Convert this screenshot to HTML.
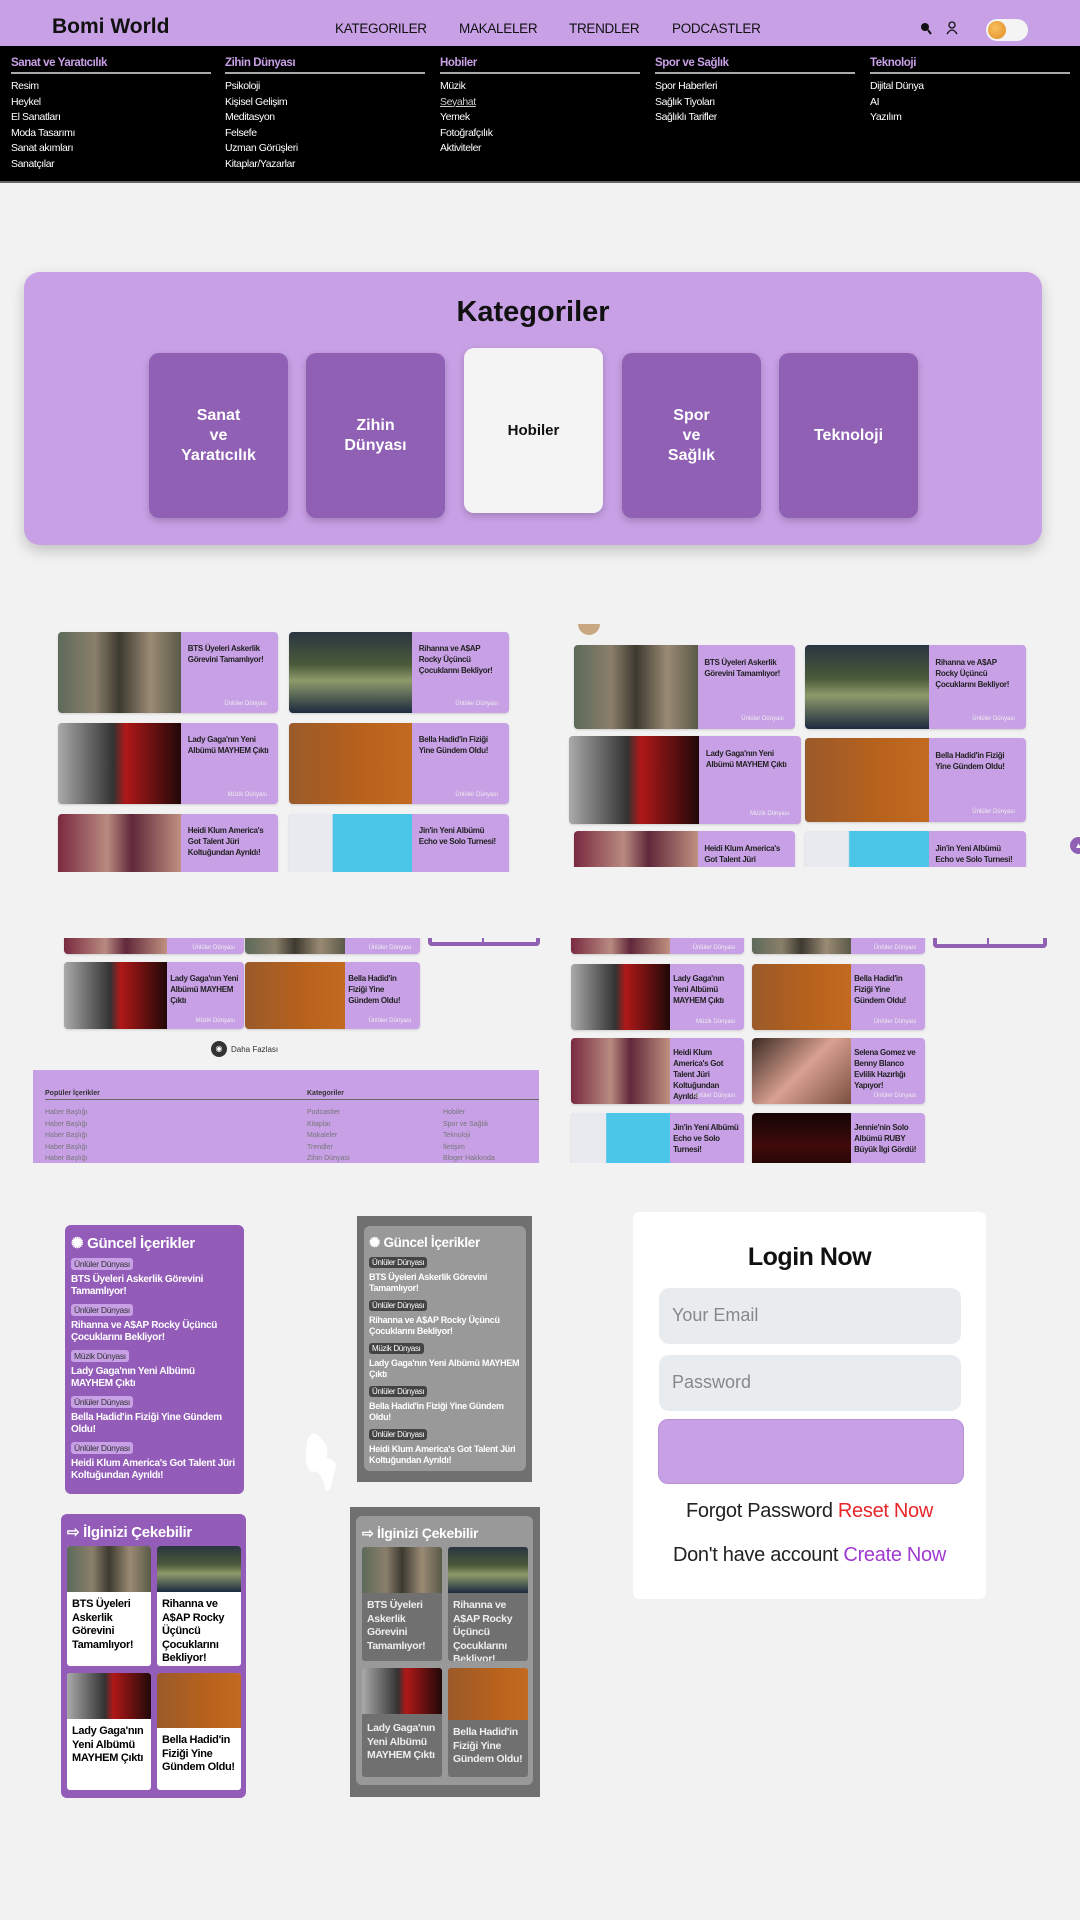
<!DOCTYPE html>
<html><head><meta charset="utf-8"><style>
*{margin:0;padding:0;box-sizing:border-box}
body{width:1080px;height:1920px;background:#f2f2f2;font-family:"Liberation Sans",sans-serif;position:relative;overflow:hidden}
.a{position:absolute}
.hdr{left:0;top:0;width:1080px;height:46px;background:#c8a0e6}
.mega{left:0;top:46px;width:1080px;height:137px;background:#000;border-bottom:2px solid #666}
.col{position:absolute;top:11px;width:200px;font-size:10.5px;color:#fff;letter-spacing:-.4px}
.col h4{color:#c8a0e6;font-size:11.5px;font-weight:bold;padding-bottom:3px;border-bottom:2px solid #aaa;margin-bottom:6px}
.col div{height:15.5px}
.cat{left:24px;top:272px;width:1018px;height:273px;background:#c8a0e6;border-radius:16px;box-shadow:0 6px 14px rgba(0,0,0,.2)}
.cc{position:absolute;top:81px;width:139px;height:165px;background:#9060b4;border-radius:10px;color:#fff;font-weight:bold;font-size:16px;display:flex;align-items:center;justify-content:center;text-align:center;line-height:20px;box-shadow:0 3px 8px rgba(0,0,0,.2)}
.clip{position:absolute;overflow:hidden}
.nc{position:absolute;background:#c8a0e6;border-radius:4px;overflow:hidden;box-shadow:0 1px 2px rgba(0,0,0,.15)}
.nc .im{position:absolute;left:0;top:0;bottom:0;width:56%}
.nc .t{position:absolute;left:59%;right:3%;top:14%;font-size:8px;font-weight:bold;color:#222;line-height:11px;letter-spacing:-.3px}
.nc .c{position:absolute;right:5%;bottom:8%;font-size:6px;color:#eee}
.bts{background:linear-gradient(90deg,#5d6a5a,#8a7f6a 30%,#3d3a30 50%,#9a8a74 75%,#5a5a48)}
.rih{background:linear-gradient(180deg,#2b3541,#4a5a3a 40%,#8e9a6a 60%,#1c2a40)}
.gag{background:linear-gradient(90deg,#aaa,#333 45%,#b01818 55%,#200808)}
.bel{background:linear-gradient(90deg,#9a5a2a,#b8621c 60%,#c26a20)}
.hei{background:linear-gradient(90deg,#7a2a40,#b88a80 40%,#60283a 60%,#c09080)}
.jin{background:linear-gradient(90deg,#e8eaf0 35%,#4cc6e8 36%)}
.sel{background:linear-gradient(135deg,#3a2a22,#d8a090 50%,#7a5040)}
.jen{background:linear-gradient(180deg,#150505,#400a0a 50%,#100404)}
.foot{left:33px;top:1070px;width:506px;height:93px;background:#c8a0e6;font-size:7px;color:#777}
.box{border-radius:6px}
.tag{display:inline-block;font-size:8.5px;padding:1px 3px;border-radius:3px;margin-top:6px;letter-spacing:-.3px}
.it{font-size:10px;font-weight:bold;line-height:12px;margin-top:2px;letter-spacing:-.3px}
.cell{position:absolute;width:84px;border-radius:3px;overflow:hidden}
.cell .p{height:46px}
.cell .tx{padding:6px 5px;font-size:11px;font-weight:bold;line-height:13.5px;letter-spacing:-.3px}
</style></head><body>

<div class="a hdr">
 <div class="a" style="left:52px;top:15px;font-size:21px;font-weight:bold;color:#111">Bomi World</div>
 <div class="a" style="left:335px;top:21px;font-size:13.5px;color:#111;letter-spacing:-.3px">KATEGORILER</div>
 <div class="a" style="left:459px;top:21px;font-size:13.5px;color:#111;letter-spacing:-.3px">MAKALELER</div>
 <div class="a" style="left:569px;top:21px;font-size:13.5px;color:#111;letter-spacing:-.3px">TRENDLER</div>
 <div class="a" style="left:672px;top:21px;font-size:13.5px;color:#111;letter-spacing:-.3px">PODCASTLER</div>
 <svg class="a" style="left:920px;top:22px" width="12" height="13"><circle cx="5" cy="5" r="4" fill="#111"/><line x1="8" y1="8" x2="11" y2="12" stroke="#111" stroke-width="2"/></svg>
 <svg class="a" style="left:946px;top:21px" width="12" height="14"><circle cx="6" cy="4" r="3" fill="none" stroke="#111" stroke-width="1.3"/><path d="M1 13 Q6 5 11 13" fill="none" stroke="#111" stroke-width="1.3"/></svg>
 <div class="a" style="left:986px;top:19px;width:42px;height:22px;border-radius:11px;background:#f4f4f4"><div class="a" style="left:2px;top:2px;width:18px;height:18px;border-radius:50%;background:radial-gradient(circle at 40% 40%,#f8c060,#e08a20)"></div></div>
</div>

<div class="a mega">
 <div class="col" style="left:11px"><h4>Sanat ve Yaratıcılık</h4><div>Resim</div><div>Heykel</div><div>El Sanatları</div><div>Moda Tasarımı</div><div>Sanat akımları</div><div>Sanatçılar</div></div>
 <div class="col" style="left:225px"><h4>Zihin Dünyası</h4><div>Psikoloji</div><div>Kişisel Gelişim</div><div>Meditasyon</div><div>Felsefe</div><div>Uzman Görüşleri</div><div>Kitaplar/Yazarlar</div></div>
 <div class="col" style="left:440px"><h4>Hobiler</h4><div>Müzik</div><div style="text-decoration:underline;color:#ccc">Seyahat</div><div>Yemek</div><div>Fotoğrafçılık</div><div>Aktiviteler</div></div>
 <div class="col" style="left:655px"><h4>Spor ve Sağlık</h4><div>Spor Haberleri</div><div>Sağlık Tiyoları</div><div>Sağlıklı Tarifler</div></div>
 <div class="col" style="left:870px"><h4>Teknoloji</h4><div>Dijital Dünya</div><div>AI</div><div>Yazılım</div></div>
</div>

<div class="a cat">
 <div class="a" style="left:0;width:1018px;top:24px;text-align:center;font-size:29px;font-weight:bold;color:#111">Kategoriler</div>
 <div class="cc" style="left:125px">Sanat<br>ve<br>Yaratıcılık</div>
 <div class="cc" style="left:282px">Zihin<br>Dünyası</div>
 <div class="cc" style="left:440px;top:76px;background:#f4f4f4;color:#111;font-size:15px">Hobiler</div>
 <div class="cc" style="left:598px">Spor<br>ve<br>Sağlık</div>
 <div class="cc" style="left:755px">Teknoloji</div>
</div>

<div class="clip" style="left:50px;top:622px;width:470px;height:250px">
 <div class="nc" style="left:8px;top:10px;width:220px;height:81px"><div class="im bts"></div><div class="t">BTS Üyeleri Askerlik Görevini Tamamlıyor!</div><div class="c">Ünlüler Dünyası</div></div>
 <div class="nc" style="left:239px;top:10px;width:220px;height:81px"><div class="im rih"></div><div class="t">Rihanna ve A$AP Rocky Üçüncü Çocuklarını Bekliyor!</div><div class="c">Ünlüler Dünyası</div></div>
 <div class="nc" style="left:8px;top:101px;width:220px;height:81px"><div class="im gag"></div><div class="t">Lady Gaga'nın Yeni Albümü MAYHEM Çıktı</div><div class="c">Müzik Dünyası</div></div>
 <div class="nc" style="left:239px;top:101px;width:220px;height:81px"><div class="im bel"></div><div class="t">Bella Hadid'in Fiziği Yine Gündem Oldu!</div><div class="c">Ünlüler Dünyası</div></div>
 <div class="nc" style="left:8px;top:192px;width:220px;height:81px"><div class="im hei"></div><div class="t">Heidi Klum America's Got Talent Jüri Koltuğundan Ayrıldı!</div></div>
 <div class="nc" style="left:239px;top:192px;width:220px;height:81px"><div class="im jin"></div><div class="t">Jin'in Yeni Albümü Echo ve Solo Turnesi!</div></div>
</div>

<div class="a" style="left:578px;top:624px;width:22px;height:11px;border-radius:0 0 11px 11px;background:#c8a880"></div>
<div class="clip" style="left:565px;top:635px;width:470px;height:232px">
 <div class="nc" style="left:9px;top:10px;width:221px;height:84px"><div class="im bts"></div><div class="t">BTS Üyeleri Askerlik Görevini Tamamlıyor!</div><div class="c">Ünlüler Dünyası</div></div>
 <div class="nc" style="left:240px;top:10px;width:221px;height:84px"><div class="im rih"></div><div class="t">Rihanna ve A$AP Rocky Üçüncü Çocuklarını Bekliyor!</div><div class="c">Ünlüler Dünyası</div></div>
 <div class="nc" style="left:4px;top:101px;width:232px;height:88px"><div class="im gag"></div><div class="t">Lady Gaga'nın Yeni Albümü MAYHEM Çıktı</div><div class="c">Müzik Dünyası</div></div>
 <div class="nc" style="left:240px;top:103px;width:221px;height:84px"><div class="im bel"></div><div class="t">Bella Hadid'in Fiziği Yine Gündem Oldu!</div><div class="c">Ünlüler Dünyası</div></div>
 <div class="nc" style="left:9px;top:196px;width:221px;height:84px"><div class="im hei"></div><div class="t">Heidi Klum America's Got Talent Jüri Koltuğundan Ayrıldı!</div></div>
 <div class="nc" style="left:240px;top:196px;width:221px;height:84px"><div class="im jin"></div><div class="t">Jin'in Yeni Albümü Echo ve Solo Turnesi!</div></div>
</div>
<div class="a" style="left:1070px;top:837px;width:17px;height:17px;border-radius:50%;background:#9060b4;color:#fff;font-size:8px;text-align:center;line-height:17px">▲</div>

<div class="clip" style="left:60px;top:938px;width:480px;height:40px">
 <div class="nc" style="left:4px;top:-18px;width:180px;height:34px"><div class="im hei" style="width:57%"></div><div class="c">Ünlüler Dünyası</div></div>
 <div class="nc" style="left:185px;top:-18px;width:175px;height:34px"><div class="im bts" style="width:57%"></div><div class="c">Ünlüler Dünyası</div></div>
 <div class="a" style="left:368px;top:-10px;width:112px;height:18px;border:4px solid #9060b4;border-top:none;border-radius:0 0 4px 4px"><div class="a" style="left:50px;top:0;width:2px;height:14px;background:#9060b4"></div></div>
</div>
<div class="nc" style="left:64px;top:962px;width:180px;height:67px"><div class="im gag" style="width:57%"></div><div class="t" style="top:16%">Lady Gaga'nın Yeni Albümü MAYHEM Çıktı</div><div class="c">Müzik Dünyası</div></div>
<div class="nc" style="left:245px;top:962px;width:175px;height:67px"><div class="im bel" style="width:57%"></div><div class="t" style="top:16%">Bella Hadid'in Fiziği Yine Gündem Oldu!</div><div class="c">Ünlüler Dünyası</div></div>
<div class="a" style="left:211px;top:1041px;width:16px;height:16px;border-radius:50%;background:#333;color:#fff;font-size:8px;text-align:center;line-height:16px">◉</div>
<div class="a" style="left:231px;top:1045px;font-size:8px;color:#333">Daha Fazlası</div>
<div class="a foot">
 <div class="a" style="left:12px;top:20px;font-weight:bold;color:#333">Popüler İçerikler</div>
 <div class="a" style="left:12px;top:29px;width:262px;height:1px;background:#666"></div>
 <div class="a" style="left:274px;top:20px;font-weight:bold;color:#333">Kategoriler</div>
 <div class="a" style="left:274px;top:29px;width:232px;height:1px;background:#666"></div>
 <div class="a" style="left:12px;top:37px;line-height:11.5px">Haber Başlığı<br>Haber Başlığı<br>Haber Başlığı<br>Haber Başlığı<br>Haber Başlığı</div>
 <div class="a" style="left:274px;top:37px;line-height:11.5px">Podcastler<br>Kitaplar<br>Makaleler<br>Trendler<br>Zihin Dünyası</div>
 <div class="a" style="left:410px;top:37px;line-height:11.5px">Hobiler<br>Spor ve Sağlık<br>Teknoloji<br>İletişim<br>Bloger Hakkında</div>
</div>

<div class="clip" style="left:565px;top:938px;width:490px;height:225px">
 <div class="nc" style="left:6px;top:-18px;width:173px;height:34px"><div class="im hei" style="width:57%"></div><div class="c">Ünlüler Dünyası</div></div>
 <div class="nc" style="left:187px;top:-18px;width:173px;height:34px"><div class="im bts" style="width:57%"></div><div class="c">Ünlüler Dünyası</div></div>
 <div class="a" style="left:368px;top:-10px;width:114px;height:20px;border:4px solid #9060b4;border-top:none;border-radius:0 0 4px 4px"><div class="a" style="left:50px;top:0;width:2px;height:16px;background:#9060b4"></div></div>
 <div class="nc" style="left:6px;top:26px;width:173px;height:66px"><div class="im gag" style="width:57%"></div><div class="t">Lady Gaga'nın Yeni Albümü MAYHEM Çıktı</div><div class="c">Müzik Dünyası</div></div>
 <div class="nc" style="left:187px;top:26px;width:173px;height:66px"><div class="im bel" style="width:57%"></div><div class="t">Bella Hadid'in Fiziği Yine Gündem Oldu!</div><div class="c">Ünlüler Dünyası</div></div>
 <div class="nc" style="left:6px;top:100px;width:173px;height:66px"><div class="im hei" style="width:57%"></div><div class="t">Heidi Klum America's Got Talent Jüri Koltuğundan Ayrıldı!</div><div class="c">Ünlüler Dünyası</div></div>
 <div class="nc" style="left:187px;top:100px;width:173px;height:66px"><div class="im sel" style="width:57%"></div><div class="t">Selena Gomez ve Benny Blanco Evlilik Hazırlığı Yapıyor!</div><div class="c">Ünlüler Dünyası</div></div>
 <div class="nc" style="left:6px;top:175px;width:173px;height:66px"><div class="im jin" style="width:57%"></div><div class="t">Jin'in Yeni Albümü Echo ve Solo Turnesi!</div></div>
 <div class="nc" style="left:187px;top:175px;width:173px;height:66px"><div class="im jen" style="width:57%"></div><div class="t">Jennie'nin Solo Albümü RUBY Büyük İlgi Gördü!</div></div>
</div>

<div class="a box" style="left:65px;top:1225px;width:179px;height:269px;background:#935cb8;color:#fff;padding:0 6px">
 <div style="font-size:15px;font-weight:bold;margin-top:9px;letter-spacing:-.3px">✺ Güncel İçerikler</div>
 <div class="tag" style="background:#c8a0e6;color:#333">Ünlüler Dünyası</div><div class="it">BTS Üyeleri Askerlik Görevini Tamamlıyor!</div>
 <div class="tag" style="background:#c8a0e6;color:#333">Ünlüler Dünyası</div><div class="it">Rihanna ve A$AP Rocky Üçüncü Çocuklarını Bekliyor!</div>
 <div class="tag" style="background:#c8a0e6;color:#333">Müzik Dünyası</div><div class="it">Lady Gaga'nın Yeni Albümü MAYHEM Çıktı</div>
 <div class="tag" style="background:#c8a0e6;color:#333">Ünlüler Dünyası</div><div class="it">Bella Hadid'in Fiziği Yine Gündem Oldu!</div>
 <div class="tag" style="background:#c8a0e6;color:#333">Ünlüler Dünyası</div><div class="it">Heidi Klum America's Got Talent Jüri Koltuğundan Ayrıldı!</div>
</div>

<div class="a" style="left:357px;top:1216px;width:175px;height:266px;background:#707070"></div>
<div class="a box" style="left:364px;top:1226px;width:162px;height:245px;background:#999;color:#fff;padding:0 5px">
 <div style="font-size:13.5px;font-weight:bold;margin-top:9px;letter-spacing:-.3px">✺ Güncel İçerikler</div>
 <div class="tag" style="background:#444;font-size:8px">Ünlüler Dünyası</div><div class="it" style="font-size:9px;line-height:11px">BTS Üyeleri Askerlik Görevini Tamamlıyor!</div>
 <div class="tag" style="background:#444;font-size:8px">Ünlüler Dünyası</div><div class="it" style="font-size:9px;line-height:11px">Rihanna ve A$AP Rocky Üçüncü Çocuklarını Bekliyor!</div>
 <div class="tag" style="background:#444;font-size:8px">Müzik Dünyası</div><div class="it" style="font-size:9px;line-height:11px">Lady Gaga'nın Yeni Albümü MAYHEM Çıktı</div>
 <div class="tag" style="background:#444;font-size:8px">Ünlüler Dünyası</div><div class="it" style="font-size:9px;line-height:11px">Bella Hadid'in Fiziği Yine Gündem Oldu!</div>
 <div class="tag" style="background:#444;font-size:8px">Ünlüler Dünyası</div><div class="it" style="font-size:9px;line-height:11px">Heidi Klum America's Got Talent Jüri Koltuğundan Ayrıldı!</div>
</div>
<svg class="a" style="left:300px;top:1428px" width="45" height="70"><path d="M8 10 Q15 0 22 12 Q30 20 26 30 Q40 32 34 45 Q30 68 26 62 Q20 40 12 44 Q2 40 8 10Z" fill="#fff"/></svg>

<div class="a box" style="left:61px;top:1514px;width:185px;height:284px;background:#935cb8">
 <div class="a" style="left:6px;top:9px;color:#fff;font-size:15px;font-weight:bold;letter-spacing:-.3px">⇨ İlginizi Çekebilir</div>
 <div class="cell" style="left:6px;top:32px;height:120px;background:#fff"><div class="p bts"></div><div class="tx">BTS Üyeleri Askerlik Görevini Tamamlıyor!</div></div>
 <div class="cell" style="left:96px;top:32px;height:120px;background:#fff"><div class="p rih"></div><div class="tx">Rihanna ve A$AP Rocky Üçüncü Çocuklarını Bekliyor!</div></div>
 <div class="cell" style="left:6px;top:159px;height:117px;background:#fff"><div class="p gag"></div><div class="tx">Lady Gaga'nın Yeni Albümü MAYHEM Çıktı</div></div>
 <div class="cell" style="left:96px;top:159px;height:117px;background:#fff"><div class="p bel" style="height:55px"></div><div class="tx">Bella Hadid'in Fiziği Yine Gündem Oldu!</div></div>
</div>

<div class="a" style="left:350px;top:1507px;width:190px;height:290px;background:#707070"></div>
<div class="a box" style="left:356px;top:1516px;width:177px;height:269px;background:#999">
 <div class="a" style="left:6px;top:9px;color:#fff;font-size:14px;font-weight:bold;letter-spacing:-.3px">⇨ İlginizi Çekebilir</div>
 <div class="cell" style="left:6px;top:31px;height:114px;width:80px;background:#707070;color:#eee"><div class="p bts"></div><div class="tx" style="font-size:10.5px">BTS Üyeleri Askerlik Görevini Tamamlıyor!</div></div>
 <div class="cell" style="left:92px;top:31px;height:114px;width:80px;background:#707070;color:#eee"><div class="p rih"></div><div class="tx" style="font-size:10.5px">Rihanna ve A$AP Rocky Üçüncü Çocuklarını Bekliyor!</div></div>
 <div class="cell" style="left:6px;top:152px;height:109px;width:80px;background:#707070;color:#eee"><div class="p gag"></div><div class="tx" style="font-size:10.5px;padding-top:8px">Lady Gaga'nın Yeni Albümü MAYHEM Çıktı</div></div>
 <div class="cell" style="left:92px;top:152px;height:109px;width:80px;background:#707070;color:#eee"><div class="p bel" style="height:52px"></div><div class="tx" style="font-size:10.5px">Bella Hadid'in Fiziği Yine Gündem Oldu!</div></div>
</div>

<div class="a" style="left:633px;top:1212px;width:353px;height:387px;background:#fff;border-radius:6px">
 <div class="a" style="left:0;width:353px;top:31px;text-align:center;font-size:25px;font-weight:bold;color:#111;letter-spacing:-.5px">Login Now</div>
 <div class="a" style="left:26px;top:76px;width:302px;height:56px;background:#e9ecef;border-radius:10px;font-size:18px;color:#888;padding:17px 13px">Your Email</div>
 <div class="a" style="left:26px;top:143px;width:302px;height:56px;background:#e9ecef;border-radius:10px;font-size:18px;color:#888;padding:17px 13px">Password</div>
 <div class="a" style="left:25px;top:207px;width:306px;height:65px;background:#c8a0e6;border-radius:10px;border:1px solid #b890d8"></div>
 <div class="a" style="left:0;width:353px;top:288px;text-align:center;font-size:20px;color:#222;letter-spacing:-.3px">Forgot Password <span style="color:#e8262a">Reset Now</span></div>
 <div class="a" style="left:0;width:353px;top:332px;text-align:center;font-size:20px;color:#222;letter-spacing:-.3px">Don't have account <span style="color:#a03ad0">Create Now</span></div>
</div>
</body></html>
